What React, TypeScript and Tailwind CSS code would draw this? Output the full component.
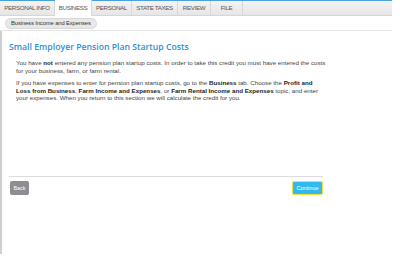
const tabs = ["PERSONAL INFO", "BUSINESS", "PERSONAL", "STATE TAXES", "REVIEW", "FILE"];
const tabWidths = ["w-[55px]", "w-[37px]", "w-[40px]", "w-[46px]", "w-[33px]", "w-[32px]"];

export default function App() {
  return (
    <div className="w-[400px] h-[274px] bg-white overflow-hidden font-['Liberation_Sans',Arial,sans-serif]">
      <div className="w-[392px]">
        {/* tab bar */}
        <div className="flex h-[16px] bg-gradient-to-b from-[#f4f4f4] to-[#e6e6e6] border-t border-[#4a9fdc] border-b border-b-[#d6d6d6]">
          {tabs.map((t, i) => (
            <div
              key={t}
              className={
                tabWidths[i] +
                " flex items-center justify-center text-[6.2px] tracking-[-0.35px] text-[#555] border-r border-[#d8d8d8] " +
                (t === "BUSINESS" ? "bg-white -mt-px h-[16px] border-b-0" : "")
              }
            >
              {t}
            </div>
          ))}
        </div>

        {/* breadcrumb */}
        <div className="h-[15px] flex items-center pl-[5px] border-b border-[#e4e4e4]">
          <span className="h-[11px] px-[5px] rounded-full bg-[#e8e8e8] border border-[#d9d9d9] text-[5.8px] tracking-[-0.1px] text-[#333] flex items-center">
            Business Income and Expenses
          </span>
        </div>
      </div>

      <div className="border-l-2 border-[#cfcfcf] h-[223px]">
        <div className="h-[145px] pt-[9px]">
          <h1 className="ml-[7px] text-[8.7px] font-semibold text-[#2d8fd5] leading-[14px] font-['Open_Sans',sans-serif]">
            Small Employer Pension Plan Startup Costs
          </h1>

          <div className="ml-[14px] mt-[5px] w-[312px] text-[6.2px] leading-[7.5px] text-[#444]">
            <p>
              You have <b className="text-[#222]">not</b> entered any pension plan startup costs. In order to take this credit you must have entered the costs for your business, farm, or farm rental.
            </p>
            <p className="mt-[5px]">
              If you have expenses to enter for pension plan startup costs, go to the <b className="text-[#222]">Business</b> tab. Choose the <b className="text-[#222]">Profit and Loss from Business</b>, <b className="text-[#222]">Farm Income and Expenses</b>, or <b className="text-[#222]">Farm Rental Income and Expenses</b> topic, and enter your expenses. When you return to this section we will calculate the credit for you.
            </p>
          </div>
        </div>

        <div className="ml-[7px] w-[314px] border-t border-[#dcdcdc] pt-[4px] flex justify-between">
          <button className="ml-[1px] w-[19px] h-[14px] rounded-[2px] bg-[#8d8e93] text-white text-[5.5px] flex items-center justify-center">
            Back
          </button>
          <button className="w-[31px] h-[14px] rounded-[2px] bg-[#30baf2] border border-[#f5e23c] text-white text-[5.5px] flex items-center justify-center">
            Continue
          </button>
        </div>
      </div>
    </div>
  );
}
